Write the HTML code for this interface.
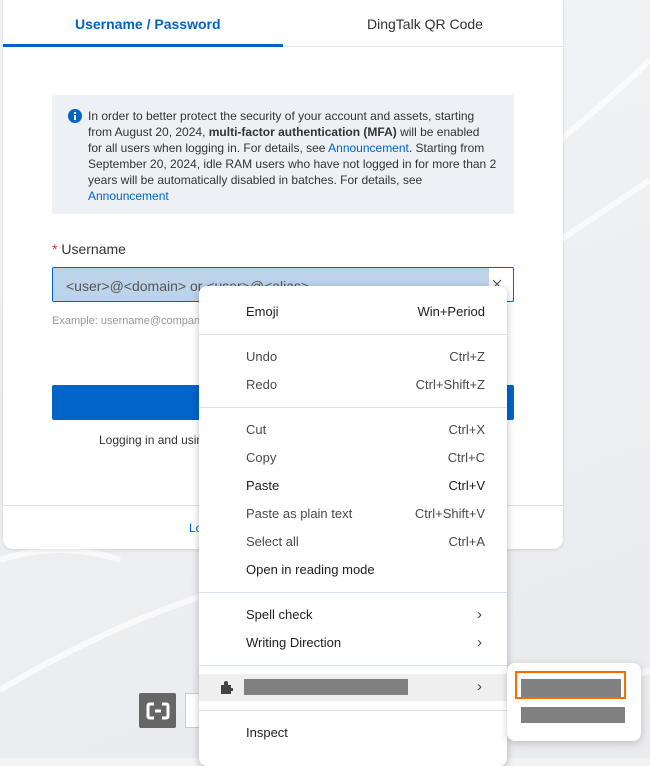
<!DOCTYPE html>
<html><head><style>
*{margin:0;padding:0;box-sizing:border-box}
body{width:650px;height:758px;overflow:hidden;position:relative;font-family:"Liberation Sans",sans-serif;background:linear-gradient(160deg,#f3f4f6 0%,#eceef1 60%,#e9ebee 100%)}
.abs{position:absolute}
.card{left:3px;top:-8px;width:560px;height:557px;background:#fff;border-radius:10px;box-shadow:0 1px 3px rgba(0,0,0,.12)}
.menu{left:199px;top:286px;width:308px;height:480px;background:#fff;border-radius:8px;box-shadow:0 2px 8px rgba(0,0,0,.25)}
.it{position:absolute;left:47px;right:22px;font-size:13px;color:#202124;height:20px;line-height:20px}
.it span{position:absolute;right:0;top:0}
.it span.ch{right:3px;color:#444;font-size:15px}
.sep{position:absolute;left:0;right:0;height:1px;background:#dbe3f0}
.dis{color:#4a4a4a}
</style></head><body>
<svg class="abs" style="left:0;top:0" width="650" height="758"><g fill="none" stroke="#fff" stroke-width="6" opacity=".7"><path d="M560 140 Q620 90 650 60"/><path d="M560 240 Q620 200 650 180"/><path d="M0 690 Q150 600 300 570"/><path d="M500 740 Q600 690 650 670"/><path d="M0 560 Q60 540 120 560"/></g></svg>
<div class="abs card"></div>
<div class="abs" style="left:3px;top:46px;width:560px;height:1px;background:#e5e5e5"></div>
<div class="abs" style="left:3px;top:44px;width:280px;height:3px;background:#0064c8"></div>
<div class="abs" style="left:75px;top:16px;font-size:14px;font-weight:bold;color:#0064c8">Username / Password</div>
<div class="abs" style="left:367px;top:16px;font-size:14px;color:#333">DingTalk QR Code</div>
<div class="abs" style="left:52px;top:95px;width:462px;height:119px;background:#edf0f5;border-radius:2px"></div>
<svg class="abs" style="left:68px;top:109px" width="14" height="14"><circle cx="7" cy="7" r="7" fill="#0064c8"/><rect x="6" y="6" width="2" height="5" fill="#fff"/><circle cx="7" cy="4" r="1.1" fill="#fff"/></svg>
<div class="abs" style="left:88px;top:108px;white-space:nowrap;font-size:12px;line-height:16px;color:#333">In order to better protect the security of your account and assets, starting<br>from August 20, 2024, <b>multi-factor authentication (MFA)</b> will be enabled<br>for all users when logging in. For details, see <span style="color:#0064c8">Announcement</span>. Starting from<br>September 20, 2024, idle RAM users who have not logged in for more than 2<br>years will be automatically disabled in batches. For details, see<br><span style="color:#0064c8">Announcement</span></div>
<div class="abs" style="left:52px;top:241px;font-size:14px;color:#333"><span style="color:#d93026">*</span> Username</div>
<div class="abs" style="left:52px;top:267px;width:462px;height:35px;border:1px solid #0064c8;border-radius:2px;background:#fff"></div>
<div class="abs" style="left:53px;top:268px;width:436px;height:33px;background:#bcd3ea"></div>
<div class="abs" style="left:66px;top:278px;font-size:14px;color:#555">&lt;user&gt;@&lt;domain&gt; or &lt;user&gt;@&lt;alias&gt;</div>
<svg class="abs" style="left:492px;top:279px" width="10" height="10"><path d="M1 1L9 9M9 1L1 9" stroke="#555" stroke-width="1.2"/></svg>
<div class="abs" style="left:52px;top:315px;font-size:11px;color:#999">Example: username@company</div>
<div class="abs" style="left:52px;top:385px;width:462px;height:35px;background:#0064c8;border-radius:2px"></div>
<div class="abs" style="left:99px;top:433px;font-size:12px;color:#333">Logging in and using</div>
<div class="abs" style="left:3px;top:505px;width:560px;height:1px;background:#e0e0e0"></div>
<div class="abs" style="left:189px;top:521px;font-size:12px;color:#0064c8">Log</div>
<div class="abs" style="left:139px;top:693px;width:37px;height:35px;background:#666;border-radius:2px"></div>
<svg class="abs" style="left:145px;top:700px" width="26" height="22"><path d="M9 4H5Q3 4 3 6V16Q3 18 5 18H9M17 4H21Q23 4 23 6V16Q23 18 21 18H17M10 11H16" fill="none" stroke="#fff" stroke-width="3"/></svg>
<div class="abs" style="left:185px;top:693px;width:20px;height:35px;background:#fff;border:1px solid #ccc"></div>
<div class="abs menu">
<div class="it" style="top:16px">Emoji<span>Win+Period</span></div>
<div class="sep" style="top:48px"></div>
<div class="it dis" style="top:61px">Undo<span>Ctrl+Z</span></div>
<div class="it dis" style="top:89px">Redo<span>Ctrl+Shift+Z</span></div>
<div class="sep" style="top:121px"></div>
<div class="it dis" style="top:134px">Cut<span>Ctrl+X</span></div>
<div class="it dis" style="top:162px">Copy<span>Ctrl+C</span></div>
<div class="it" style="top:190px">Paste<span>Ctrl+V</span></div>
<div class="it dis" style="top:218px">Paste as plain text<span>Ctrl+Shift+V</span></div>
<div class="it dis" style="top:246px">Select all<span>Ctrl+A</span></div>
<div class="it" style="top:274px">Open in reading mode</div>
<div class="sep" style="top:306px"></div>
<div class="it" style="top:319px">Spell check<span class="ch">›</span></div>
<div class="it" style="top:347px">Writing Direction<span class="ch">›</span></div>
<div class="sep" style="top:379px"></div>
<div class="abs" style="left:0;top:388px;width:308px;height:27px;background:#efefef"></div>
<svg class="abs" style="left:20px;top:394px" width="14" height="14"><path d="M2 5H5V3Q5 1 7 1Q9 1 9 3V5H12V8H13Q14.5 8 14.5 9.5Q14.5 11 13 11H12V14H2Z" fill="#444"/></svg>
<div class="abs" style="left:45px;top:393px;width:164px;height:16px;background:#808080"></div>
<div class="it" style="top:391px"><span class="ch">›</span></div>
<div class="sep" style="top:424px"></div>
<div class="it" style="top:437px">Inspect</div>
</div>
<div class="abs" style="left:507px;top:663px;width:134px;height:78px;background:#fff;border-radius:8px;box-shadow:0 2px 8px rgba(0,0,0,.2)"></div>
<div class="abs" style="left:521px;top:679px;width:100px;height:18px;background:#808080"></div>
<div class="abs" style="left:515px;top:671px;width:111px;height:28px;border:2px solid #ff6a00"></div>
<div class="abs" style="left:521px;top:707px;width:104px;height:16px;background:#808080"></div>
</body></html>
